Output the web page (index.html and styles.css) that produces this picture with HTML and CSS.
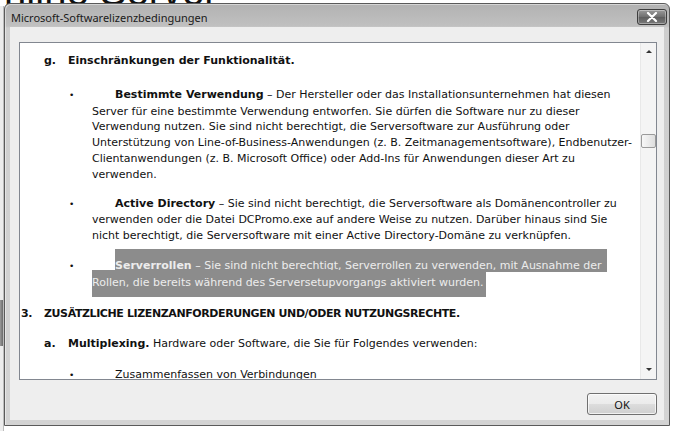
FILE: index.html
```html
<!DOCTYPE html>
<html lang="de">
<head>
    <meta charset="UTF-8">
    <title>Microsoft-Softwarelizenzbedingungen</title>
    <link rel="stylesheet" href="styles.css">
</head>
<body>
    <div class="backdrop-title">Online Server</div>
    <div class="backdrop-strip">
        <span class="strip-block"></span>
    </div>

    <div class="dialog">
        <div class="titlebar">
            <span class="title">Microsoft-Softwarelizenzbedingungen</span>
            <button class="close" aria-label="Schließen">
                <svg width="12" height="10" viewBox="0 0 12 10">
                    <path d="M2 1 L10 9 M10 1 L2 9" stroke="#fff" stroke-width="2.2" stroke-linecap="round"/>
                </svg>
            </button>
        </div>

        <div class="client">
            <div class="license">
                <div class="doc">
                    <div class="clause heading">
                        <span class="num">g.</span>
                        <span>Einschränkungen der Funktionalität.</span>
                    </div>

                    <p class="item">
                        <span class="bullet">•</span><b>Bestimmte Verwendung</b> – Der Hersteller oder das Installationsunternehmen hat diesen<br>
                        Server für eine bestimmte Verwendung entworfen. Sie dürfen die Software nur zu dieser<br>
                        Verwendung nutzen. Sie sind nicht berechtigt, die Serversoftware zur Ausführung oder<br>
                        Unterstützung von Line-of-Business-Anwendungen (z. B. Zeitmanagementsoftware), Endbenutzer-<br>
                        Clientanwendungen (z. B. Microsoft Office) oder Add-Ins für Anwendungen dieser Art zu<br>
                        verwenden.
                    </p>

                    <p class="item item-ad">
                        <span class="bullet">•</span><b>Active Directory</b> – Sie sind nicht berechtigt, die Serversoftware als Domänencontroller zu<br>
                        verwenden oder die Datei DCPromo.exe auf andere Weise zu nutzen. Darüber hinaus sind Sie<br>
                        nicht berechtigt, die Serversoftware mit einer Active Directory-Domäne zu verknüpfen.
                    </p>

                    <p class="item">
                        <span class="bullet">•</span><span class="sel sel-first"><b>Serverrollen</b> – Sie sind nicht berechtigt, Serverrollen zu verwenden, mit Ausnahme der</span><br>
                        <span class="sel sel-last">Rollen, die bereits während des Serversetupvorgangs aktiviert wurden.</span>
                    </p>

                    <div class="clause section">
                        <span class="num">3.</span>
                        <span>ZUSÄTZLICHE LIZENZANFORDERUNGEN UND/ODER NUTZUNGSRECHTE.</span>
                    </div>

                    <div class="clause">
                        <span class="num"><b>a.</b></span>
                        <span><b>Multiplexing.</b> Hardware oder Software, die Sie für Folgendes verwenden:</span>
                    </div>

                    <p class="item">
                        <span class="bullet">•</span>Zusammenfassen von Verbindungen
                    </p>
                </div>

                <div class="scrollbar">
                    <span class="arrow up"></span>
                    <div class="track">
                        <span class="thumb"></span>
                    </div>
                    <span class="arrow down"></span>
                </div>
            </div>

            <div class="actions">
                <button class="ok">OK</button>
            </div>
        </div>
    </div>
</body>
</html>
```

FILE: styles.css
```css
* {
    box-sizing: border-box;
    margin: 0;
    padding: 0;
}

body {
    width: 675px;
    height: 431px;
    overflow: hidden;
    position: relative;
    background: #fff;
    font-family: "DejaVu Sans", sans-serif;
    color: #111;
}

/* what shows of the window behind the dialog */
.backdrop-title {
    position: absolute;
    left: -27px;
    top: -29px;
    font: 40px/40px "Liberation Sans", sans-serif;
    color: #111;
    white-space: nowrap;
    z-index: 0;
}

.backdrop-strip {
    position: absolute;
    left: 0;
    top: 6px;
    width: 4px;
    height: 425px;
    background: #ececec;
    border-right: 1px solid #bdbdbd;
}

.strip-block {
    display: block;
    margin-top: 294px;
    height: 46px;
    background: linear-gradient(90deg, #9a9a9a, #6a6a6a);
}

/* dialog window */
.dialog {
    position: absolute;
    z-index: 1;
    left: 4px;
    top: 3px;
    width: 666px;
    height: 423px;
    border: 1px solid #5a5a5a;
    border-radius: 6px 6px 0 0;
    background: linear-gradient(#b2b2b2, #c0c0c0 22px, #cecece 24px, #d3d3d3);
    padding: 0 5px 5px 5px;
    display: flex;
    flex-direction: column;
    box-shadow: inset 1px 1px 0 rgba(255,255,255,0.45);
}

.titlebar {
    height: 23px;
    display: flex;
    align-items: flex-start;
    justify-content: space-between;
}

.title {
    font: 11px/14px "Noto Sans", sans-serif;
    color: #1a1a1a;
    margin: 7px 0 0 1px;
}

.close {
    width: 30px;
    height: 16px;
    margin: 5px -3px 0 0;
    border: 1px solid #3e3e3e;
    border-radius: 3px;
    background: linear-gradient(#9a9a9a, #6e6e6e 50%, #5e5e5e 51%, #7a7a7a);
    display: flex;
    align-items: center;
    justify-content: center;
    box-shadow: inset 0 0 0 1px rgba(255,255,255,0.35);
}

.client {
    flex: 1;
    background: #eeeeee;
    padding: 15px 7px 0 9px;
    display: flex;
    flex-direction: column;
}

.license {
    height: 338px;
    border: 1px solid #828790;
    background: #fff;
    display: flex;
}

.doc {
    flex: 1;
    overflow: hidden;
    padding-top: 10px;
    font-size: 11px;
    line-height: 15.8px;
    white-space: nowrap;
    color: #111;
}

.clause {
    display: flex;
    margin-left: 24px;
    margin-bottom: 15px;
}

.clause .num {
    width: 24px;
    font-weight: bold;
}

.heading {
    font-weight: bold;
    margin-bottom: 18px;
}

.section {
    font-weight: bold;
    letter-spacing: -0.4px;
    margin-left: 1px;
    margin-bottom: 15px;
}

.section .num {
    width: 23px;
}

.item {
    padding-left: 72px;
    text-indent: -23px;
    margin-bottom: 14.5px;
}

.doc > .item:first-of-type {
    margin-bottom: 13px;
}

.bullet {
    display: inline-block;
    width: 46px;
    text-indent: 0;
    font-size: 9px;
}

.sel {
    background: #8c8c8c;
    color: #ececec;
}

.sel-first {
    padding: 10px 5px 0 0;
}

.sel-last {
    padding: 6px 2px 8px 0;
}

/* scrollbar */
.scrollbar {
    width: 16px;
    background: #f4f4f4;
    border-left: 1px solid #e8e8e8;
    display: flex;
    flex-direction: column;
    align-items: center;
}

.arrow {
    width: 0;
    height: 0;
    border-left: 3px solid transparent;
    border-right: 3px solid transparent;
    margin: 7px 0;
}

.arrow.up {
    border-bottom: 3px solid #333;
}

.arrow.down {
    border-top: 3px solid #333;
    margin-bottom: 8px;
}

.track {
    flex: 1;
    width: 100%;
    padding-top: 74px;
}

.thumb {
    display: block;
    width: 15px;
    height: 14px;
    border: 1px solid #9a9a9a;
    border-radius: 2px;
    background: linear-gradient(90deg, #f7f7f7, #dedede);
}

.actions {
    display: flex;
    justify-content: flex-end;
    padding-top: 13px;
}

.ok {
    width: 70px;
    height: 22px;
    border: 1px solid #707070;
    border-radius: 3px;
    background: linear-gradient(#f2f2f2, #ebebeb 50%, #dddddd 51%, #cfcfcf);
    font: 11px "Noto Sans", sans-serif;
    color: #111;
    box-shadow: inset 0 0 0 1px rgba(255,255,255,0.7);
}
```
